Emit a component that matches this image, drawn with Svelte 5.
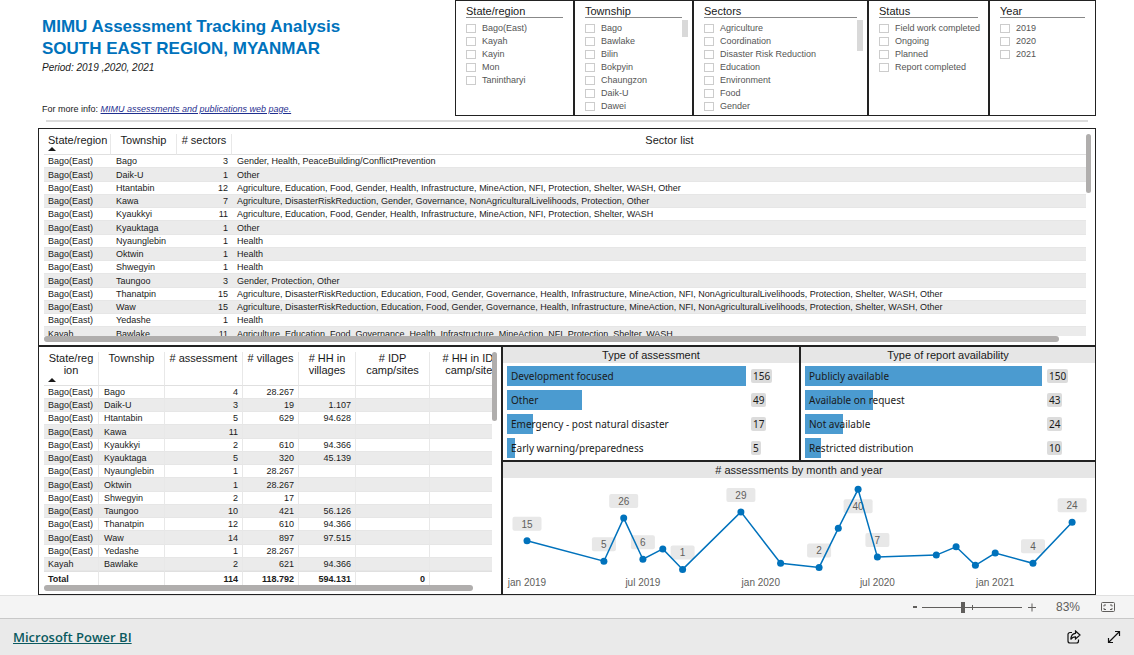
<script>
	const slicers = [
		{ title: 'State/region', items: ['Bago(East)', 'Kayah', 'Kayin', 'Mon', 'Tanintharyi'] },
		{ title: 'Township', items: ['Bago', 'Bawlake', 'Bilin', 'Bokpyin', 'Chaungzon', 'Daik-U', 'Dawei'], thumb: 17 },
		{
			title: 'Sectors',
			items: ['Agriculture', 'Coordination', 'Disaster Risk Reduction', 'Education', 'Environment', 'Food', 'Gender'],
			thumb: 31
		},
		{ title: 'Status', items: ['Field work completed', 'Ongoing', 'Planned', 'Report completed'] },
		{ title: 'Year', items: ['2019', '2020', '2021'] }
	];

	const allSectors =
		'Agriculture, DisasterRiskReduction, Education, Food, Gender, Governance, Health, Infrastructure, MineAction, NFI, NonAgriculturalLivelihoods, Protection, Shelter, WASH, Other';

	const sectorRows = [
		['Bago(East)', 'Bago', 3, 'Gender, Health, PeaceBuilding/ConflictPrevention'],
		['Bago(East)', 'Daik-U', 1, 'Other'],
		['Bago(East)', 'Htantabin', 12, 'Agriculture, Education, Food, Gender, Health, Infrastructure, MineAction, NFI, Protection, Shelter, WASH, Other'],
		['Bago(East)', 'Kawa', 7, 'Agriculture, DisasterRiskReduction, Gender, Governance, NonAgriculturalLivelihoods, Protection, Other'],
		['Bago(East)', 'Kyaukkyi', 11, 'Agriculture, Education, Food, Gender, Health, Infrastructure, MineAction, NFI, Protection, Shelter, WASH'],
		['Bago(East)', 'Kyauktaga', 1, 'Other'],
		['Bago(East)', 'Nyaunglebin', 1, 'Health'],
		['Bago(East)', 'Oktwin', 1, 'Health'],
		['Bago(East)', 'Shwegyin', 1, 'Health'],
		['Bago(East)', 'Taungoo', 3, 'Gender, Protection, Other'],
		['Bago(East)', 'Thanatpin', 15, allSectors],
		['Bago(East)', 'Waw', 15, allSectors],
		['Bago(East)', 'Yedashe', 1, 'Health'],
		['Kayah', 'Bawlake', 11, 'Agriculture, Education, Food, Governance, Health, Infrastructure, MineAction, NFI, Protection, Shelter, WASH']
	];

	// state, township, assessments, villages, households in villages
	const countRows = [
		['Bago(East)', 'Bago', '4', '28.267', ''],
		['Bago(East)', 'Daik-U', '3', '19', '1.107'],
		['Bago(East)', 'Htantabin', '5', '629', '94.628'],
		['Bago(East)', 'Kawa', '11', '', ''],
		['Bago(East)', 'Kyaukkyi', '2', '610', '94.366'],
		['Bago(East)', 'Kyauktaga', '5', '320', '45.139'],
		['Bago(East)', 'Nyaunglebin', '1', '28.267', ''],
		['Bago(East)', 'Oktwin', '1', '28.267', ''],
		['Bago(East)', 'Shwegyin', '2', '17', ''],
		['Bago(East)', 'Taungoo', '10', '421', '56.126'],
		['Bago(East)', 'Thanatpin', '12', '610', '94.366'],
		['Bago(East)', 'Waw', '14', '897', '97.515'],
		['Bago(East)', 'Yedashe', '1', '28.267', ''],
		['Kayah', 'Bawlake', '2', '621', '94.366']
	];

	const barCharts = [
		{
			title: 'Type of assessment',
			max: 156,
			bars: [
				['Development focused', 156],
				['Other', 49],
				['Emergency - post natural disaster', 17],
				['Early warning/preparedness', 5]
			]
		},
		{
			title: 'Type of report availability',
			max: 150,
			bars: [
				['Publicly available', 150],
				['Available on request', 43],
				['Not available', 24],
				['Restricted distribution', 10]
			]
		}
	];

	// label: where the value sits relative to the point, none if left out
	const months = [
		{ date: '2019-01-01', value: 15, label: 'above' },
		{ date: '2019-05-01', value: 5, label: 'above' },
		{ date: '2019-06-01', value: 26, label: 'above' },
		{ date: '2019-07-01', value: 6, label: 'above' },
		{ date: '2019-08-01', value: 11 },
		{ date: '2019-09-01', value: 1, label: 'above' },
		{ date: '2019-12-01', value: 29, label: 'above' },
		{ date: '2020-02-01', value: 4 },
		{ date: '2020-04-01', value: 2, label: 'above' },
		{ date: '2020-05-01', value: 21 },
		{ date: '2020-06-01', value: 40, label: 'below' },
		{ date: '2020-07-01', value: 7, label: 'above' },
		{ date: '2020-10-01', value: 8 },
		{ date: '2020-11-01', value: 12 },
		{ date: '2020-12-01', value: 3 },
		{ date: '2021-01-01', value: 9 },
		{ date: '2021-03-01', value: 4, label: 'above' },
		{ date: '2021-05-01', value: 24, label: 'above' }
	];

	const ticks = [
		['2019-01-01', 'jan 2019'],
		['2019-07-01', 'jul 2019'],
		['2020-01-01', 'jan 2020'],
		['2020-07-01', 'jul 2020'],
		['2021-01-01', 'jan 2021']
	];

	const start = Date.parse('2019-01-01');

	function xOf(date) {
		const days = (Date.parse(date) - start) / 86400000;
		return Math.round((24 + days * 0.6405) * 10) / 10;
	}

	function yOf(value) {
		return Math.round((93.5 - value * 2.055) * 10) / 10;
	}

	const points = months.map((m) => ({
		...m,
		x: xOf(m.date),
		y: yOf(m.value),
		labelY: yOf(m.value) + (m.label === 'below' ? 17 : -17),
		labelWidth: m.value > 9 ? 29 : 24
	}));

	let zoom = $state(41);
</script>

<div class="page">
	<main>
		<header>
			<div class="intro">
				<h1>MIMU Assessment Tracking Analysis<br />SOUTH EAST REGION, MYANMAR</h1>
				<p class="period">Period: 2019 ,2020, 2021</p>
				<p class="info">For more info: <a href="#info">MIMU assessments and publications web page.</a></p>
			</div>
			<div class="slicers">
				{#each slicers as slicer}
					<fieldset class="slicer">
						<div class="slicer-title">{slicer.title}</div>
						{#each slicer.items as item}
							<label><input type="checkbox" />{item}</label>
						{/each}
						{#if slicer.thumb}
							<div class="slicer-thumb" style="height: {slicer.thumb}px"></div>
						{/if}
					</fieldset>
				{/each}
			</div>
		</header>
		<hr />

		<section class="panel">
			<div class="scroller sectors">
				<table>
					<colgroup><col class="w67" /><col class="w66" /><col class="w55" /><col /></colgroup>
					<thead>
						<tr>
							<th>State/region<span class="sort"></span></th>
							<th>Township</th>
							<th># sectors</th>
							<th>Sector list</th>
						</tr>
					</thead>
					<tbody>
						{#each sectorRows as [state, township, count, list]}
							<tr><td>{state}</td><td>{township}</td><td class="num">{count}</td><td>{list}</td></tr>
						{/each}
					</tbody>
				</table>
			</div>
			<div class="h-track"><div class="h-thumb wide"></div></div>
			<div class="v-thumb short"></div>
		</section>

		<div class="lower">
			<section class="panel">
				<div class="scroller counts">
					<table>
						<colgroup>
							<col class="w55" /><col class="w66" /><col class="w78" /><col class="w56" />
							<col class="w57" /><col class="w74" /><col />
						</colgroup>
						<thead>
							<tr>
								<th class="break">State/region<span class="sort"></span></th>
								<th>Township</th>
								<th># assessment</th>
								<th># villages</th>
								<th># HH in<br />villages</th>
								<th># IDP<br />camp/sites</th>
								<th># HH in IDP<br />camp/sites</th>
							</tr>
						</thead>
						<tbody>
							{#each countRows as [state, township, ...counts]}
								<tr>
									<td>{state}</td>
									<td>{township}</td>
									{#each counts as count}
										<td class="num">{count}</td>
									{/each}
									<td></td>
									<td></td>
								</tr>
							{/each}
						</tbody>
						<tfoot>
							<tr>
								<td>Total</td>
								<td></td>
								<td class="num">114</td>
								<td class="num">118.792</td>
								<td class="num">594.131</td>
								<td class="num">0</td>
								<td></td>
							</tr>
						</tfoot>
					</table>
				</div>
				<div class="h-track"><div class="h-thumb"></div></div>
				<div class="v-thumb"></div>
			</section>

			<div class="charts">
				<div class="bar-charts">
					{#each barCharts as chart}
						<section class="panel-chart">
							<h2>{chart.title}</h2>
							<div class="bars">
								{#each chart.bars as [label, value]}
									<div class="bar-row">
										<div class="bar-area">
											<div class="bar" style="width: {(value / chart.max) * 100}%">{label}</div>
										</div>
										<div class="value"><span>{value}</span></div>
									</div>
								{/each}
							</div>
						</section>
					{/each}
				</div>

				<section class="panel-chart">
					<h2># assessments by month and year</h2>
					<svg class="line" viewBox="0 0 592 116">
						{#each points as p}
							{#if p.label}
								<rect x={p.x - p.labelWidth / 2} y={p.labelY - 7} width={p.labelWidth} height="14" rx="2" />
								<text x={p.x} y={p.labelY + 4}>{p.value}</text>
							{/if}
						{/each}
						<polyline points={points.map((p) => `${p.x},${p.y}`).join(' ')} />
						{#each points as p}
							<circle cx={p.x} cy={p.y} r="3.5" />
						{/each}
						{#each ticks as [date, name]}
							<text x={xOf(date)} y="108">{name}</text>
						{/each}
					</svg>
				</section>
			</div>
		</div>
	</main>

	<div class="status">
		<button aria-label="Zoom out"><svg width="6" height="12"><path d="M1 6h4" stroke-width="2" /></svg></button>
		<input type="range" min="0" max="100" aria-label="Zoom" bind:value={zoom} />
		<button aria-label="Zoom in"><svg width="8" height="12"><path d="M0 6.5h8M4 2.5v8" /></svg></button>
		<span class="percent">83%</span>
		<button aria-label="Fit to page">
			<svg width="14" height="12">
				<rect x="0.5" y="1.5" width="13" height="9" rx="1" />
				<path d="M3 5.5v-1.500h2M9 4h2v1.500M11 7v1.500h-2M5 8.500h-2v-1.500" />
			</svg>
		</button>
	</div>

	<footer>
		<a href="#powerbi">Microsoft Power BI</a>
		<div class="actions">
			<button aria-label="Share">
				<svg width="14" height="14">
					<path d="M5 2.5H3a2 2 0 0 0-2 2V11a2 2 0 0 0 2 2h6.5a2 2 0 0 0 2-2V9.5" />
					<path d="M8.5 1l4.5 4-4.5 4V6.8C6 6.8 4.8 7.7 3.8 9.5 4 6 5.6 3.5 8.5 3.3z" />
				</svg>
			</button>
			<button aria-label="Full screen">
				<svg width="14" height="14"><path d="M1.5 12.5l11-11M8 1.5h4.5V6M1.5 8v4.5H6" /></svg>
			</button>
		</div>
	</footer>
</div>

<style>
	:global(body) {
		margin: 0;
		background: #fff;
	}

	.page {
		font-family: "Liberation Sans", Arial, sans-serif;
		font-size: 9px;
		color: #1a1a1a;
	}

	main {
		padding: 0 38px;
	}

	button {
		display: flex;
		padding: 0;
		border: 0;
		background: none;
		cursor: pointer;
	}

	/* header */

	header {
		display: grid;
		grid-template-columns: 417fr 641fr;
		height: 116px;
	}

	.intro {
		display: flex;
		flex-direction: column;
		padding: 16px 0 0 4px;
	}

	h1 {
		margin: 0 0 2px;
		font-size: 17px;
		line-height: 22px;
		font-weight: bold;
		color: #0072bc;
	}

	.intro p {
		margin: 0;
		line-height: 12px;
	}

	.intro .period {
		font-size: 10px;
		font-style: italic;
	}

	.intro .info {
		margin-top: 29px;
	}

	.info a {
		font-style: italic;
		color: #1f2f8f;
	}

	.slicers {
		display: grid;
		grid-template-columns: 119fr 119fr 175fr 121fr 107fr;
	}

	.slicer {
		position: relative;
		display: flex;
		flex-direction: column;
		min-width: 0;
		margin: 0;
		padding: 4px 10px 0;
		border: 1px solid #222;
		color: #555;
	}

	.slicer-title {
		margin-bottom: 4px;
		border-bottom: 1px solid #888;
		font-size: 11px;
		line-height: 12px;
		color: #1a1a1a;
	}

	.slicer label {
		display: flex;
		align-items: center;
		gap: 6px;
		line-height: 13px;
		white-space: nowrap;
	}

	.slicer input {
		appearance: none;
		flex: none;
		box-sizing: border-box;
		width: 10px;
		height: 9px;
		margin: 0;
		border: 1px solid #ccc;
	}

	.slicer-thumb {
		position: absolute;
		top: 19px;
		right: 4px;
		width: 6px;
		background: #d9d9d9;
	}

	hr {
		height: 2px;
		margin: 4px 8px 6px;
		border: 0;
		background: #dcdcdc;
	}

	/* tables */

	.panel {
		position: relative;
		padding: 5px 9px 3px 5px;
		border: 1px solid #222;
	}

	.scroller {
		overflow: hidden;
	}

	.sectors {
		height: 202px;
	}

	.counts {
		height: 233px;
	}

	table {
		width: calc(100% + 22px);
		table-layout: fixed;
		border-collapse: separate;
		border-spacing: 0;
	}

	.w55 { width: 55px }
	.w56 { width: 56px }
	.w57 { width: 57px }
	.w66 { width: 66px }
	.w67 { width: 67px }
	.w74 { width: 74px }
	.w78 { width: 78px }

	th {
		position: relative;
		box-sizing: border-box;
		height: 21px;
		padding: 0 4px;
		border-right: 1px solid #e8e8e8;
		border-bottom: 1px solid #e0e0e0;
		font-size: 11px;
		line-height: 12px;
		font-weight: normal;
		vertical-align: top;
		white-space: nowrap;
	}

	.counts th {
		height: 34px;
	}

	th.break {
		white-space: normal;
		word-break: break-all;
	}

	.sort {
		position: absolute;
		left: 4px;
		bottom: 3px;
		border: 4px solid transparent;
		border-top: 0;
		border-bottom: 4px solid #1a1a1a;
	}

	td {
		box-sizing: border-box;
		height: 13px;
		padding: 0 5px 0 4px;
		border-bottom: 1px solid #e6e6e6;
		line-height: 12px;
		white-space: nowrap;
	}

	.counts td {
		border-right: 1px solid #e8e8e8;
	}

	.num {
		padding-right: 4px;
		text-align: right;
	}

	td:nth-child(n + 2) {
		padding-left: 5px;
	}

	tbody tr:nth-child(even) td {
		background: #ebebeb;
	}

	.sectors tr:nth-child(4n + 2) td,
	.counts tr:nth-child(4n) td {
		height: 14px;
	}

	tfoot td {
		height: 14px;
		border-top: 1px solid #e0e0e0;
		border-bottom: 0;
		font-weight: bold;
	}

	.h-track {
		height: 6px;
		margin-right: -4px;
	}

	.h-thumb {
		width: 95%;
		height: 6px;
		border-radius: 3px;
		background: #b0aead;
	}

	.h-thumb.wide {
		width: 97%;
	}

	.v-thumb {
		position: absolute;
		top: 5px;
		right: 4px;
		width: 5px;
		height: 69px;
		border-radius: 3px;
		background: #b0aead;
	}

	.v-thumb.short {
		height: 59px;
	}

	/* charts */

	.lower {
		display: grid;
		grid-template-columns: 464fr 594fr;
	}

	.charts {
		display: flex;
		flex-direction: column;
		min-width: 0;
	}

	.bar-charts {
		display: grid;
		grid-template-columns: 298fr 296fr;
	}

	.panel-chart {
		border: 1px solid #222;
	}

	h2 {
		margin: 0;
		background: #e6e6e6;
		font-size: 11px;
		line-height: 16px;
		font-weight: normal;
		text-align: center;
	}

	.bars {
		display: flex;
		flex-direction: column;
		gap: 4px;
		padding: 3px 4px 2px;
		font-family: "Noto Sans", "Open Sans", sans-serif;
		font-size: 10px;
		line-height: 20px;
	}

	.bar-row {
		display: flex;
		align-items: center;
		gap: 5px;
	}

	.bar-area {
		flex: 1;
	}

	.bar {
		box-sizing: border-box;
		height: 20px;
		padding-left: 4px;
		background: #4b9bd0;
		white-space: nowrap;
	}

	.value {
		display: flex;
		width: 44px;
		line-height: 14px;
	}

	.value span {
		padding: 0 2px;
		border-radius: 2px;
		background: #dcdcdc;
	}

	.line {
		display: block;
		width: 100%;
	}

	.line rect {
		fill: #e8e8e8;
	}

	.line text {
		font-size: 10px;
		fill: #605e5c;
		text-anchor: middle;
	}

	.line polyline {
		fill: none;
		stroke: #0072bc;
		stroke-width: 1.5;
	}

	.line circle {
		fill: #0072bc;
	}

	/* bottom bars */

	.status {
		display: flex;
		align-items: center;
		justify-content: flex-end;
		height: 22px;
		padding-right: 19px;
		border-top: 1px solid #e0e0e0;
		background: #f4f4f4;
		font-size: 12px;
		color: #605e5c;
	}

	.status svg {
		fill: none;
		stroke: #605e5c;
	}

	.status input {
		appearance: none;
		width: 100px;
		height: 12px;
		margin: 0 6px 0 4px;
		background:
			linear-gradient(#605e5c, #605e5c) 50px 50% / 1px 5px no-repeat,
			linear-gradient(#605e5c, #605e5c) 0 50% / 100% 1px no-repeat;
	}

	.status input::-webkit-slider-thumb {
		appearance: none;
		width: 4px;
		height: 11px;
		background: #605e5c;
	}

	.percent {
		margin: 0 21px 0 20px;
	}

	footer {
		display: flex;
		align-items: center;
		justify-content: space-between;
		height: 36px;
		padding: 0 13px;
		border-top: 1px solid #c8c8c8;
		background: #eaeaea;
		font-family: "Open Sans", "Noto Sans", sans-serif;
		font-size: 13px;
		font-weight: 600;
	}

	footer a {
		color: #0b5a60;
	}

	.actions {
		display: flex;
		gap: 26px;
	}

	.actions svg {
		fill: none;
		stroke: #111;
		stroke-width: 1.2;
	}
</style>
